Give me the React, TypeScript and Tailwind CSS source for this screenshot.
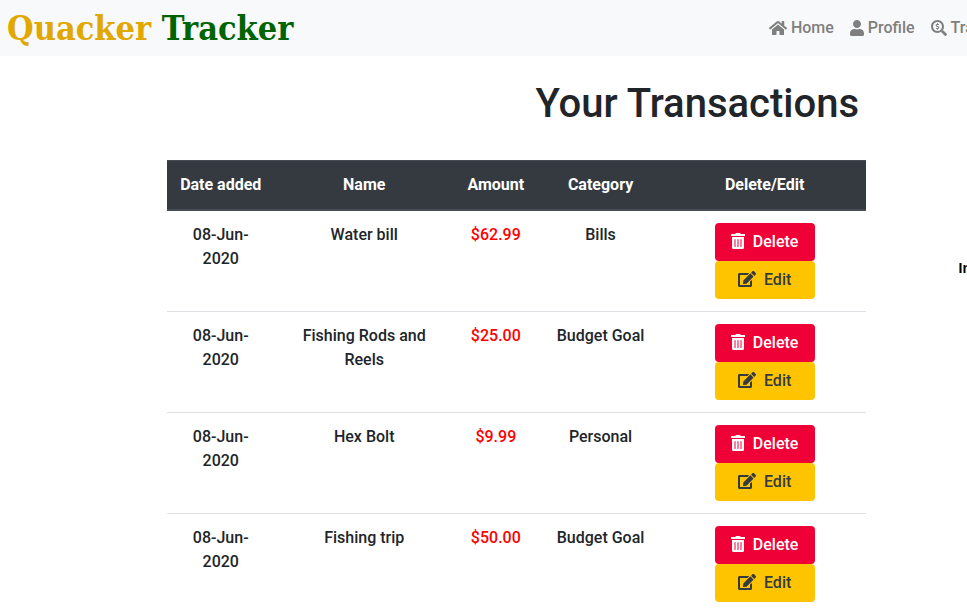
import { FaEdit, FaHome, FaSearchDollar, FaTrashAlt, FaUser } from "react-icons/fa";

const transactions = [
  { name: "Water bill", amount: "$62.99", category: "Bills" },
  { name: "Fishing Rods and Reels", amount: "$25.00", category: "Budget Goal" },
  { name: "Hex Bolt", amount: "$9.99", category: "Personal" },
  { name: "Fishing trip", amount: "$50.00", category: "Budget Goal" },
];

const navLink = "flex items-center gap-1 whitespace-nowrap text-[#7f7f7f]";
const rowButton = "flex h-[38px] w-[100px] items-center justify-center gap-2 rounded";

function Header() {
  return (
    <header className="flex h-14 w-[144.2%] items-center bg-[#f8f9fa]">
      <div className="w-[55%] pl-[7px]">
        <a
          href="#home"
          className="whitespace-nowrap font-['DejaVu_Serif_Condensed','DejaVu_Serif',serif] text-[34px] leading-[48px] font-bold text-[#e0a800]"
        >
          Quacker <span className="text-[#006400]">Tracker</span>
        </a>
      </div>
      <nav className="flex gap-4 pl-[2px] font-medium">
        <a href="#home" className={navLink}>
          <FaHome className="h-4 w-[18px]" />
          Home
        </a>
        <a href="#profile" className={navLink}>
          <FaUser className="h-4 w-[14px]" />
          Profile
        </a>
        <a href="#transactions" className={navLink}>
          <FaSearchDollar className="size-4" />
          Transactions
        </a>
      </nav>
    </header>
  );
}

export default function App() {
  return (
    <div className="min-h-screen overflow-hidden bg-white font-['Roboto',sans-serif] text-base text-[#212529]">
      <Header />
      <main className="w-[144.2%]">
        <h1 className="pt-6 text-center text-[40px] leading-[48px] font-medium">Your Transactions</h1>
        <div className="flex items-start pt-8 pl-[12%]">
          <table className="w-[56.9%] table-fixed border-collapse text-center font-medium">
            <colgroup>
              <col className="w-[15.3%]" />
              <col className="w-[25.8%]" />
              <col className="w-[11.9%]" />
              <col className="w-[18.1%]" />
              <col className="w-[28.9%]" />
            </colgroup>
            <thead className="bg-[#343a40] text-white">
              <tr className="border-t border-b-2 border-[#454d55]">
                <th className="p-3 font-bold whitespace-nowrap">Date added</th>
                <th className="p-3 font-bold">Name</th>
                <th className="p-3 font-bold whitespace-nowrap">Amount</th>
                <th className="p-3 font-bold">Category</th>
                <th className="p-3 font-bold">Delete/Edit</th>
              </tr>
            </thead>
            <tbody>
              {transactions.map((item) => (
                <tr key={item.name} className="border-b border-[#dee2e6] align-top">
                  <td className="p-3">08-Jun-2020</td>
                  <td className="p-3">{item.name}</td>
                  <td className="p-3 text-[#ff0000]">{item.amount}</td>
                  <td className="p-3">{item.category}</td>
                  <td className="p-3">
                    <div className="flex flex-col items-center">
                      <button type="button" className={`${rowButton} bg-[#ef0037] text-white`}>
                        <FaTrashAlt className="mb-0.5 h-4 w-[14px]" />
                        Delete
                      </button>
                      <button type="button" className={`${rowButton} bg-[#ffc400] text-[#343a40]`}>
                        <FaEdit className="mb-0.5 h-4 w-[18px]" />
                        Edit
                      </button>
                    </div>
                  </td>
                </tr>
              ))}
            </tbody>
          </table>
          <p className="pt-[100px] pl-[93px] font-['Liberation_Sans',sans-serif] text-[14px] leading-4 font-bold text-black">
            Income
          </p>
        </div>
      </main>
    </div>
  );
}
